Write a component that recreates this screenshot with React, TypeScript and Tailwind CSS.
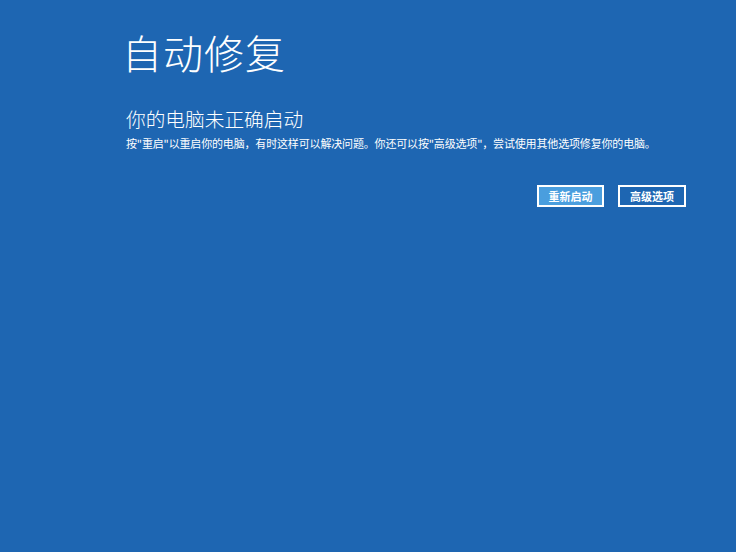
const FONT = { fontFamily: '"Noto Sans CJK SC", "Noto Sans", sans-serif' }

export default function App() {
  return (
    <div className="w-[736px] h-[552px] bg-[#1e66b2] text-white overflow-hidden" style={FONT}>
      <div className="pl-[122px] pt-[24px]">
        <h1 className="text-[40px] leading-[56px] font-light tracking-[1px]">自动修复</h1>
      </div>
      <div className="pl-[126px] pt-[27px] pr-[50px]">
        <h2 className="text-[19.7px] leading-[24px] font-light">你的电脑未正确启动</h2>
        <p className="text-[11px] leading-[16px] mt-[4px] tracking-[-0.16px]">
          按"重启"以重启你的电脑，有时这样可以解决问题。你还可以按"高级选项"，尝试使用其他选项修复你的电脑。
        </p>
        <div className="flex justify-end gap-[14px] mt-[34px]">
          <button className="w-[67px] h-[22px] border-2 border-white bg-[#4a9ede] text-[11px] font-bold leading-none">
            重新启动
          </button>
          <button className="w-[68px] h-[22px] border-2 border-white text-[11px] font-bold leading-none">
            高级选项
          </button>
        </div>
      </div>
    </div>
  )
}
